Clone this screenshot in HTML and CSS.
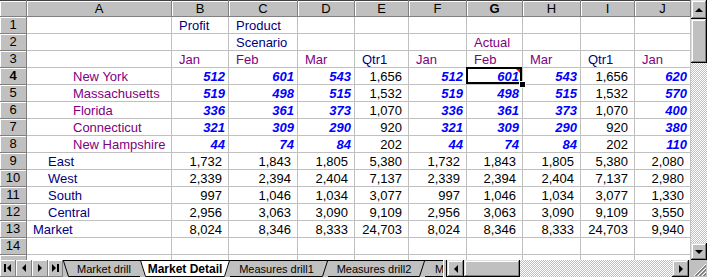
FILE: index.html
```html
<!DOCTYPE html>
<html lang="en">
<head>
    <meta charset="UTF-8">
    <title>Market Detail</title>
    <link rel="stylesheet" href="styles.css">
</head>
<body>
    <div class="window">
        <div class="sheet">
            <div class="corner"></div>
            <div class="ch">A</div><div class="ch">B</div><div class="ch">C</div><div class="ch">D</div><div class="ch">E</div>
            <div class="ch">F</div><div class="ch act">G</div><div class="ch">H</div><div class="ch">I</div><div class="ch">J</div>

            <div class="rh">1</div>
            <div class="c"></div><div class="c t nv">Profit</div><div class="c t nv">Product</div><div class="c"></div><div class="c"></div>
            <div class="c"></div><div class="c"></div><div class="c"></div><div class="c"></div><div class="c"></div>

            <div class="rh">2</div>
            <div class="c"></div><div class="c"></div><div class="c t nv">Scenario</div><div class="c"></div><div class="c"></div>
            <div class="c"></div><div class="c t pu">Actual</div><div class="c"></div><div class="c"></div><div class="c"></div>

            <div class="rh">3</div>
            <div class="c"></div><div class="c t pu">Jan</div><div class="c t pu">Feb</div><div class="c t pu">Mar</div><div class="c t nv">Qtr1</div>
            <div class="c t pu">Jan</div><div class="c t pu">Feb</div><div class="c t pu">Mar</div><div class="c t nv">Qtr1</div><div class="c t pu">Jan</div>

            <div class="rh act">4</div>
            <div class="c a2 pu">New York</div><div class="c n b">512</div><div class="c n b">601</div><div class="c n b">543</div><div class="c n">1,656</div>
            <div class="c n b">512</div><div class="c n b sel">601<span class="note"></span></div><div class="c n b">543</div><div class="c n">1,656</div><div class="c n b">620</div>

            <div class="rh">5</div>
            <div class="c a2 pu">Massachusetts</div><div class="c n b">519</div><div class="c n b">498</div><div class="c n b">515</div><div class="c n">1,532</div>
            <div class="c n b">519</div><div class="c n b">498</div><div class="c n b">515</div><div class="c n">1,532</div><div class="c n b">570</div>

            <div class="rh">6</div>
            <div class="c a2 pu">Florida</div><div class="c n b">336</div><div class="c n b">361</div><div class="c n b">373</div><div class="c n">1,070</div>
            <div class="c n b">336</div><div class="c n b">361</div><div class="c n b">373</div><div class="c n">1,070</div><div class="c n b">400</div>

            <div class="rh">7</div>
            <div class="c a2 pu">Connecticut</div><div class="c n b">321</div><div class="c n b">309</div><div class="c n b">290</div><div class="c n">920</div>
            <div class="c n b">321</div><div class="c n b">309</div><div class="c n b">290</div><div class="c n">920</div><div class="c n b">380</div>

            <div class="rh">8</div>
            <div class="c a2 pu">New Hampshire</div><div class="c n b">44</div><div class="c n b">74</div><div class="c n b">84</div><div class="c n">202</div>
            <div class="c n b">44</div><div class="c n b">74</div><div class="c n b">84</div><div class="c n">202</div><div class="c n b">110</div>

            <div class="rh">9</div>
            <div class="c a1 nv">East</div><div class="c n">1,732</div><div class="c n">1,843</div><div class="c n">1,805</div><div class="c n">5,380</div>
            <div class="c n">1,732</div><div class="c n">1,843</div><div class="c n">1,805</div><div class="c n">5,380</div><div class="c n">2,080</div>

            <div class="rh">10</div>
            <div class="c a1 nv">West</div><div class="c n">2,339</div><div class="c n">2,394</div><div class="c n">2,404</div><div class="c n">7,137</div>
            <div class="c n">2,339</div><div class="c n">2,394</div><div class="c n">2,404</div><div class="c n">7,137</div><div class="c n">2,980</div>

            <div class="rh">11</div>
            <div class="c a1 nv">South</div><div class="c n">997</div><div class="c n">1,046</div><div class="c n">1,034</div><div class="c n">3,077</div>
            <div class="c n">997</div><div class="c n">1,046</div><div class="c n">1,034</div><div class="c n">3,077</div><div class="c n">1,330</div>

            <div class="rh">12</div>
            <div class="c a1 nv">Central</div><div class="c n">2,956</div><div class="c n">3,063</div><div class="c n">3,090</div><div class="c n">9,109</div>
            <div class="c n">2,956</div><div class="c n">3,063</div><div class="c n">3,090</div><div class="c n">9,109</div><div class="c n">3,550</div>

            <div class="rh">13</div>
            <div class="c a0 nv">Market</div><div class="c n">8,024</div><div class="c n">8,346</div><div class="c n">8,333</div><div class="c n">24,703</div>
            <div class="c n">8,024</div><div class="c n">8,346</div><div class="c n">8,333</div><div class="c n">24,703</div><div class="c n">9,940</div>

            <div class="rh">14</div>
            <div class="c"></div><div class="c"></div><div class="c"></div><div class="c"></div><div class="c"></div>
            <div class="c"></div><div class="c"></div><div class="c"></div><div class="c"></div><div class="c"></div>

            <div class="rh"></div>
            <div class="c"></div><div class="c"></div><div class="c"></div><div class="c"></div><div class="c"></div>
            <div class="c"></div><div class="c"></div><div class="c"></div><div class="c"></div><div class="c"></div>
        </div>

        <!-- vertical scrollbar -->
        <div class="vscroll">
            <div class="sbtn"><i class="arr up"></i></div>
            <div class="sbtn vthumb"></div>
            <div class="track"></div>
            <div class="sbtn"><i class="arr down"></i></div>
        </div>

        <!-- sheet tabs + horizontal scrollbar -->
        <div class="bottom">
            <div class="nav">
                <div class="nb">
                    <svg width="16" height="17" viewBox="0 0 16 17"><rect x="4" y="4" width="2" height="8" fill="#000"/><polygon points="11,4 11,12 7,8" fill="#000"/></svg>
                </div>
                <div class="nb">
                    <svg width="16" height="17" viewBox="0 0 16 17"><polygon points="10,4 10,12 6,8" fill="#000"/></svg>
                </div>
                <div class="nb">
                    <svg width="16" height="17" viewBox="0 0 16 17"><polygon points="6,4 6,12 10,8" fill="#000"/></svg>
                </div>
                <div class="nb last">
                    <svg width="15" height="17" viewBox="0 0 15 17"><polygon points="4,4 4,12 8,8" fill="#000"/><rect x="9" y="4" width="2" height="8" fill="#000"/></svg>
                </div>
            </div>

            <div class="tabs">
                <div class="tab t1">
                    <svg class="tab-shape" width="82" height="16" viewBox="0 0 82 16"><polygon points="0,0 82,0 77,16 5,16" fill="#c0c0c0"/><polyline points="0.5,0 5.5,15.5 77,15.5" fill="none" stroke="#000"/></svg>
                    <span>Market drill</span>
                </div>
                <div class="tab t2 on">
                    <svg class="tab-shape" width="90" height="17" viewBox="0 0 90 17"><polygon points="0,0 90,0 85,17 5,17" fill="#fff"/><polyline points="0.5,0.5 5.5,16.5 84.5,16.5 89.5,0.5" fill="none" stroke="#000"/></svg>
                    <span>Market Detail</span>
                </div>
                <div class="tab t3">
                    <svg class="tab-shape" width="103" height="16" viewBox="0 0 103 16"><polygon points="0,0 103,0 98,16 5,16" fill="#c0c0c0"/><polyline points="5,15.5 97.5,15.5 102.5,0" fill="none" stroke="#000"/></svg>
                    <span>Measures drill1</span>
                </div>
                <div class="tab t4">
                    <svg class="tab-shape" width="102" height="16" viewBox="0 0 102 16"><polygon points="0,0 102,0 97,16 5,16" fill="#c0c0c0"/><polyline points="5,15.5 96.5,15.5 101.5,0" fill="none" stroke="#000"/></svg>
                    <span>Measures drill2</span>
                </div>
                <div class="tab t5">
                    <svg class="tab-shape" width="100" height="16" viewBox="0 0 100 16"><polygon points="0,0 100,0 95,16 5,16" fill="#c0c0c0"/><polyline points="5,15.5 94.5,15.5 99.5,0" fill="none" stroke="#000"/></svg>
                    <span>Measures drill3</span>
                </div>
            </div>

            <div class="split"></div>

            <div class="hscroll">
                <div class="sbtn"><i class="arr left"></i></div>
                <div class="sbtn hthumb"></div>
                <div class="track"></div>
                <div class="sbtn"><i class="arr right"></i></div>
            </div>
        </div>

        <div class="grip">
            <svg width="16" height="17" viewBox="0 0 16 17">
                <line x1="15" y1="4" x2="3" y2="16" stroke="#fff"/>
                <line x1="15" y1="5" x2="4" y2="16" stroke="#808080"/>
                <line x1="15" y1="6" x2="5" y2="16" stroke="#808080"/>
                <line x1="15" y1="8" x2="7" y2="16" stroke="#fff"/>
                <line x1="15" y1="9" x2="8" y2="16" stroke="#808080"/>
                <line x1="15" y1="10" x2="9" y2="16" stroke="#808080"/>
                <line x1="15" y1="12" x2="11" y2="16" stroke="#fff"/>
                <line x1="15" y1="13" x2="12" y2="16" stroke="#808080"/>
                <line x1="15" y1="14" x2="13" y2="16" stroke="#808080"/>
            </svg>
        </div>
    </div>
</body>
</html>
```

FILE: styles.css
```css
* {
    box-sizing: border-box;
}

body {
    margin: 0;
    font-family: "Liberation Sans", Arial, sans-serif;
    font-size: 13px;
    background-color: #c0c0c0;
    color: #000000;
}

.window {
    display: grid;
    grid-template-columns: 691px 16px;
    grid-template-rows: 260px 17px;
    width: 707px;
    height: 277px;
    overflow: hidden;
}

/* Сітка клітинок */
.sheet {
    display: grid;
    grid-template-columns: 27px 145px 57px 69px 57px 54px 58px 56px 58px 54px 56px;
    grid-auto-rows: 17px;
    background-color: #ffffff;
    overflow: hidden;
}

.corner,
.ch,
.rh {
    background-color: #c0c0c0;
    border-right: 1px solid #808080;
    border-bottom: 1px solid #808080;
    box-shadow: inset 1px 1px #ffffff;
    text-align: center;
    line-height: 16px;
}

.corner,
.ch {
    box-shadow: inset 0 1px #404040, inset 1px 2px #ffffff;
    line-height: 17px;
}

.ch.act,
.rh.act {
    font-weight: bold;
}

.c {
    border-right: 1px solid #c0c0c0;
    border-bottom: 1px solid #c0c0c0;
    line-height: 17px;
    white-space: nowrap;
}

.t {
    padding-left: 7px;
}

.a0 {
    padding-left: 6px;
}

.a1 {
    padding-left: 21px;
}

.a2 {
    padding-left: 46px;
}

.n {
    text-align: right;
    padding-right: 6px;
}

.b {
    color: #0000ff;
    font-weight: bold;
    font-style: italic;
    padding-right: 3px;
}

.pu {
    color: #800080;
}

.nv {
    color: #000080;
}

/* Активна клітинка */
.sel {
    position: relative;
}

.sel::before {
    content: "";
    position: absolute;
    left: -1px;
    top: -1px;
    right: 0;
    bottom: 0;
    border: 2px solid #000000;
}

.sel::after {
    content: "";
    position: absolute;
    right: -3px;
    bottom: -3px;
    width: 5px;
    height: 5px;
    background-color: #000000;
    box-shadow: 0 0 0 1px #ffffff;
}

.sel .note {
    position: absolute;
    top: 1px;
    right: 2px;
    width: 0;
    height: 0;
    border-left: 4px solid transparent;
    border-top: 4px solid #ff0000;
}

/* Смуги прокрутки */
.sbtn {
    flex: 0 0 17px;
    display: flex;
    align-items: center;
    justify-content: center;
    background-color: #c0c0c0;
    box-shadow: inset -1px -1px #000000, inset 1px 1px #dfdfdf, inset -2px -2px #808080, inset 2px 2px #ffffff;
}

.track {
    flex: 1;
    background: repeating-conic-gradient(#c0c0c0 0 25%, #ffffff 0 50%) 0 0 / 2px 2px;
}

.vscroll {
    display: flex;
    flex-direction: column;
}

.vscroll .sbtn:first-child {
    flex-basis: 19px;
}

.vthumb {
    flex-basis: 44px;
}

.arr {
    width: 0;
    height: 0;
    border: 4px solid transparent;
}

.arr.up {
    border-top: 0;
    border-bottom-color: #000000;
}

.arr.down {
    border-bottom: 0;
    border-top-color: #000000;
}

.arr.left {
    border-left: 0;
    border-right-color: #000000;
}

.arr.right {
    border-right: 0;
    border-left-color: #000000;
}

/* Нижня панель з вкладками */
.bottom {
    display: flex;
    background-color: #c0c0c0;
}

.nav {
    display: flex;
    width: 63px;
}

.nb {
    width: 16px;
    height: 17px;
    box-shadow: inset -1px -1px #808080, inset 1px 1px #ffffff;
}

.nb.last {
    width: 15px;
}

.nb svg {
    display: block;
}

.tabs {
    display: flex;
    width: 380px;
    padding-left: 5px;
    border-top: 1px solid #000000;
    overflow: hidden;
}

.tab {
    position: relative;
    flex: none;
    height: 16px;
    margin-left: -5px;
    display: flex;
    align-items: center;
    justify-content: center;
    font-size: 11px;
}

.tab-shape {
    position: absolute;
    left: 0;
    top: 0;
}

.tab span {
    position: relative;
}

.t1 {
    width: 82px;
    z-index: 1;
}

.t2 {
    width: 90px;
    z-index: 10;
}

.t3 {
    width: 103px;
    z-index: 4;
}

.t4 {
    width: 102px;
    z-index: 3;
}

.t5 {
    width: 100px;
    z-index: 2;
    justify-content: flex-start;
    padding-left: 15px;
}

.tab.on {
    height: 17px;
    margin-top: -1px;
    font-size: 12px;
    font-weight: bold;
}

.split {
    width: 4px;
    box-shadow: inset -1px 0 #000000, inset 1px 0 #ffffff;
}

.hscroll {
    display: flex;
    flex: 1;
    padding-right: 2px;
}

.hscroll .sbtn {
    flex: 0 0 17px;
}

.hscroll .hthumb {
    flex: 0 0 56px;
}

.grip svg {
    display: block;
}
```
